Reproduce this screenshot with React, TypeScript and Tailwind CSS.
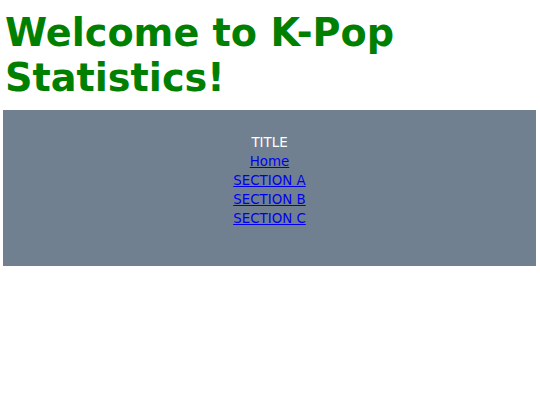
export default function App() {
  return (
    <div className="min-h-screen bg-white font-['DejaVu_Sans',sans-serif]">
      <h1 className="px-[5px] pt-[11px] text-[38.2px] font-bold leading-[45px] text-[#008000]">
        Welcome to K-Pop Statistics!
      </h1>
      <nav className="ml-[3px] mr-[4px] mt-[9px] h-[156px] bg-[#708090] pt-[23px] text-center text-[13.4px] leading-[19px]">
        <div className="text-white">TITLE</div>
        <ul>
          <li><a href="#" className="text-[#0000ee] underline">Home</a></li>
          <li><a href="#" className="text-[#0000ee] underline">SECTION A</a></li>
          <li><a href="#" className="text-[#0000ee] underline">SECTION B</a></li>
          <li><a href="#" className="text-[#0000ee] underline">SECTION C</a></li>
        </ul>
      </nav>
    </div>
  );
}
